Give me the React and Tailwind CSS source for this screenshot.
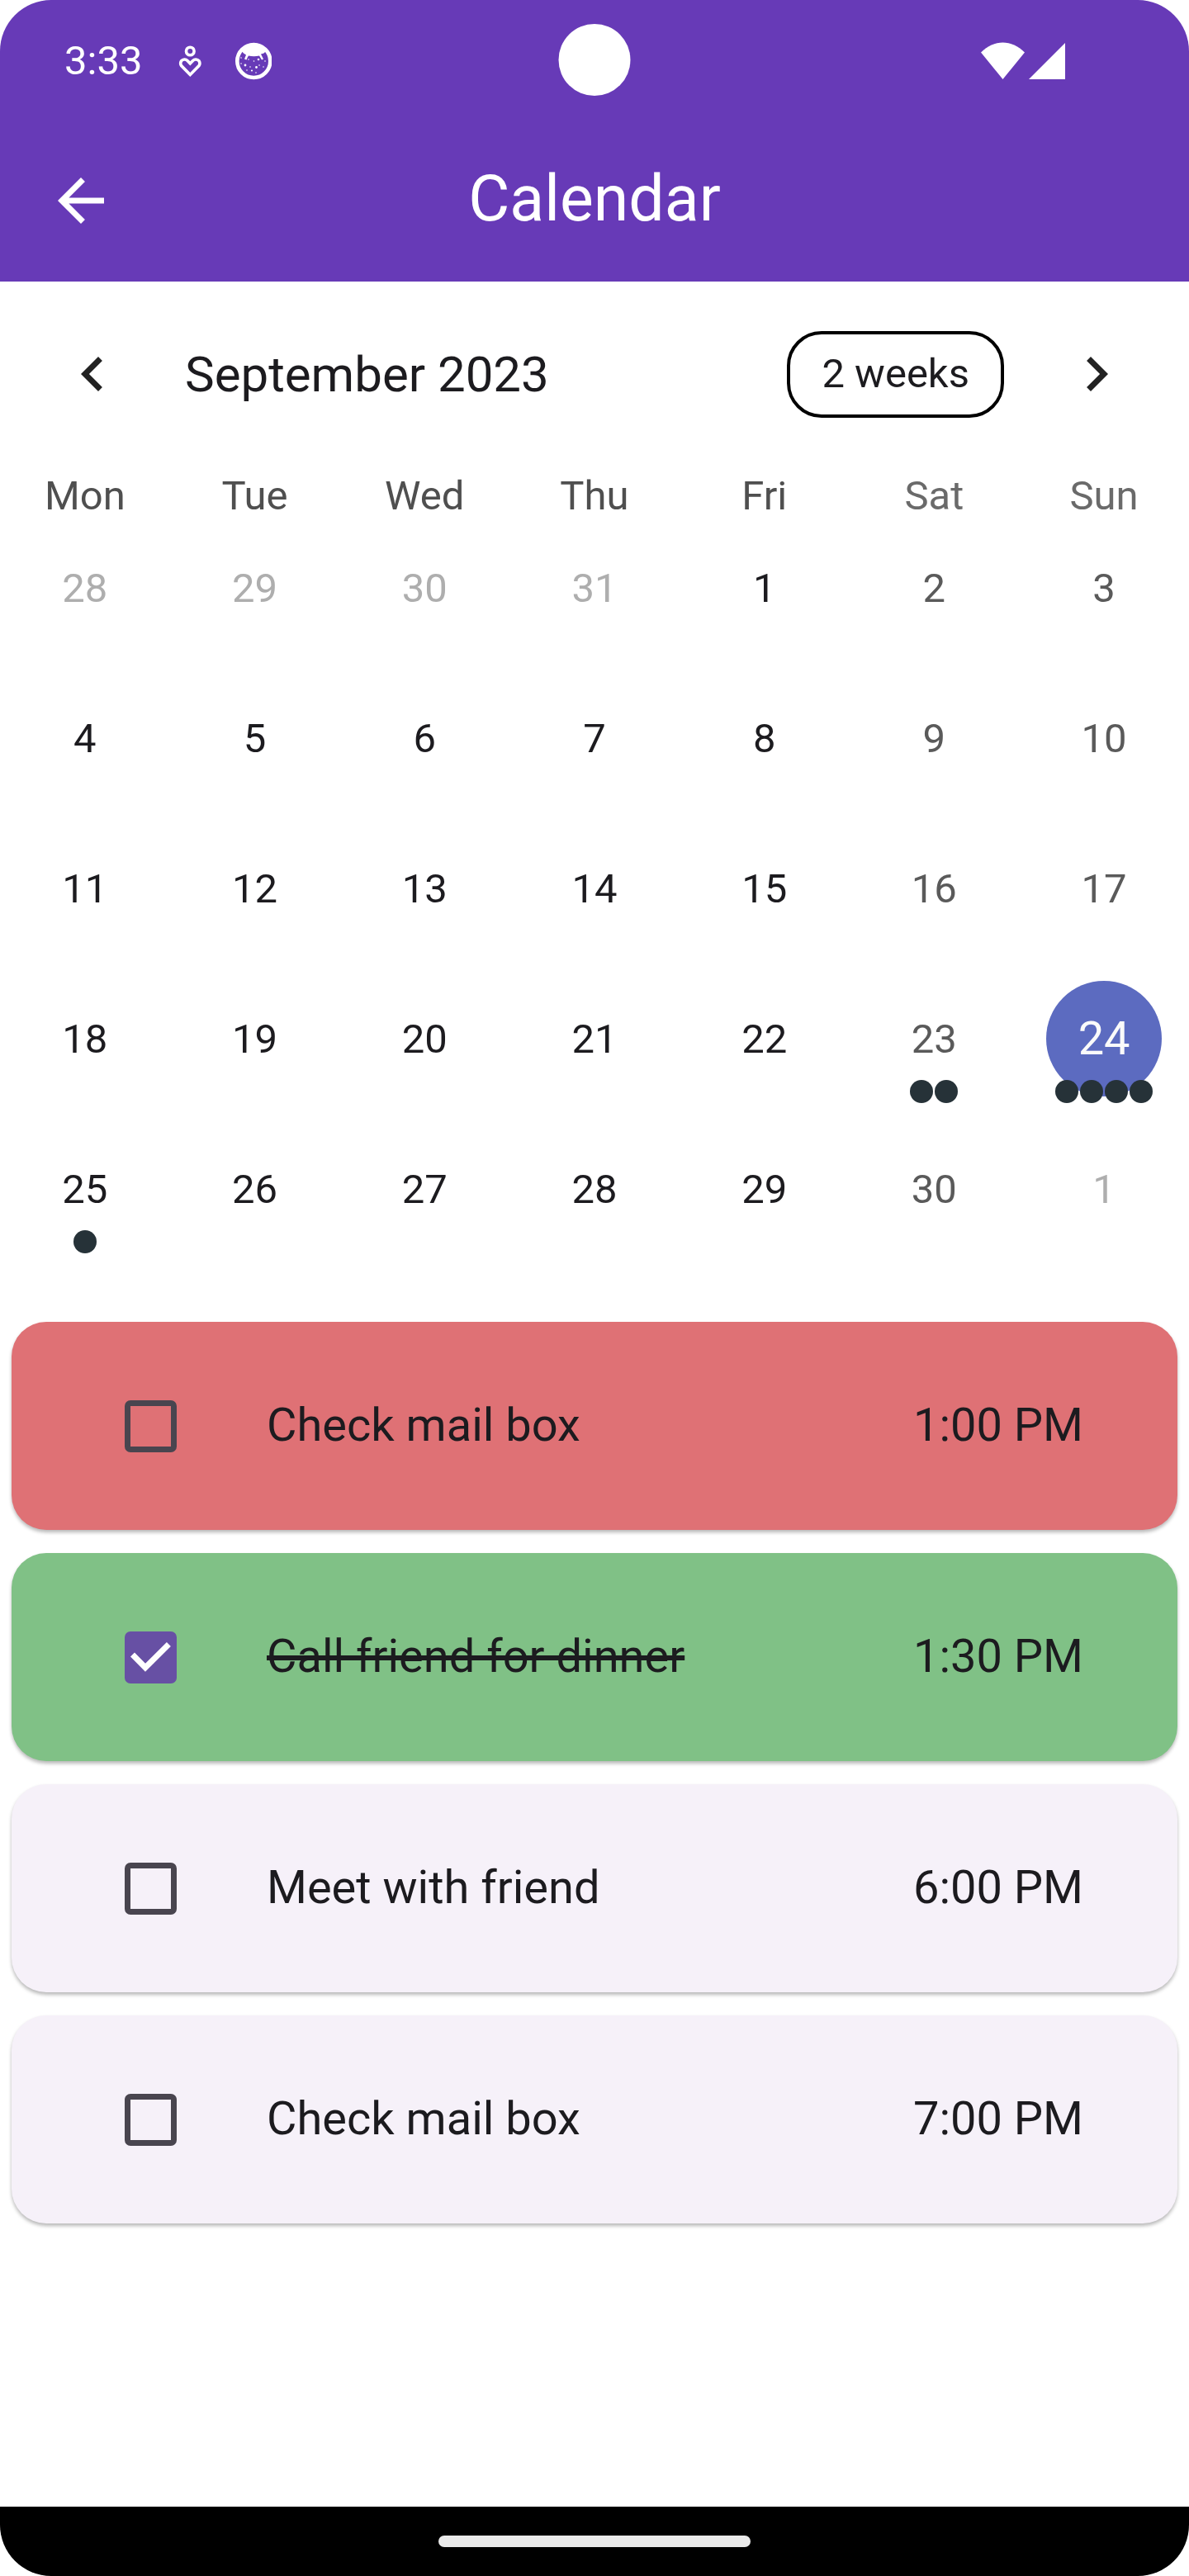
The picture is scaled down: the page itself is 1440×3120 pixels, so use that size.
import { useState } from "react";

const WEEKDAYS = ["Mon", "Tue", "Wed", "Thu", "Fri", "Sat", "Sun"];

const WEEKS = [
  [28, 29, 30, 31, 1, 2, 3],
  [4, 5, 6, 7, 8, 9, 10],
  [11, 12, 13, 14, 15, 16, 17],
  [18, 19, 20, 21, 22, 23, 24],
  [25, 26, 27, 28, 29, 30, 1],
];

// Number of events on days of the current month.
const EVENTS = { 23: 2, 24: 4, 25: 1 };

const TASKS = [
  { id: "t1", title: "Check mail box", time: "1:00 PM", done: false, card: "bg-[#df7175]" },
  { id: "t2", title: "Call friend for dinner", time: "1:30 PM", done: true, card: "bg-[#80c186]" },
  { id: "t3", title: "Meet with friend", time: "6:00 PM", done: false, card: "bg-[#f6f1f9]" },
  { id: "t4", title: "Check mail box", time: "7:00 PM", done: false, card: "bg-[#f6f1f9]" },
];

function HeartPersonIcon() {
  return (
    <svg viewBox="0 0 28 40" className="h-10 w-7" fill="none" stroke="currentColor" strokeWidth="3.6" aria-hidden="true">
      <circle cx="14.3" cy="8" r="4.8" />
      <path d="M14.3 36.4 L3.6 25.6 A5.4 5.4 0 0 1 3.6 19.8 C5.6 17.6 9 17.4 11 19.4 L14.3 22.8 L17.6 19.4 C19.6 17.4 23 17.6 25 19.8 A5.4 5.4 0 0 1 25 25.6 Z" />
    </svg>
  );
}

const SPECKS = [
  [7, 19, 0.8], [16, 21, 0.8], [22.5, 23, 0.8], [28, 21, 1.3], [36, 23, 0.8], [7, 26, 0.8], [12, 28, 1.4],
  [18, 30, 0.8], [25.5, 30.5, 1.4], [29, 28, 0.8], [34, 30, 0.8], [14, 34, 0.8], [20, 34.5, 1.1], [25, 37, 0.8],
];

function CatFaceIcon() {
  return (
    <svg viewBox="0 0 44 46" className="h-[46px] w-11" aria-hidden="true">
      <circle cx="22.3" cy="23" r="20" fill="none" stroke="currentColor" strokeWidth="4.6" />
      <path
        fill="currentColor"
        d="M7 10 C11 4 16 1.5 22.3 1.5 C29 1.5 34 4 38 10 L34.5 13.5 L31 14.5 L34 20.5 L32 21.5 L29 16.6 C25 17.6 20 17.6 16 16.6 L14.5 19 L13.5 21.5 L11 20.5 L13 15.5 L10 13.5 Z"
      />
      {SPECKS.map(([x, y, r]) => (
        <circle key={`${x}-${y}`} cx={x} cy={y} r={r} fill="currentColor" />
      ))}
    </svg>
  );
}

function StatusBar() {
  return (
    <div className="relative flex h-[145px] items-center justify-between pt-[2px] pr-[150px] pl-[78px]">
      <div className="flex items-center">
        <span className="text-[49px] leading-[58px]">3:33</span>
        <span className="ml-11"><HeartPersonIcon /></span>
        <span className="ml-[41px]"><CatFaceIcon /></span>
      </div>
      <span className="absolute top-[29px] left-1/2 size-[87px] -translate-x-1/2 rounded-full bg-white" />
      <div className="flex items-center gap-[5px]">
        <svg viewBox="0 0 53 45" className="h-[45px] w-[53px]" fill="currentColor" aria-hidden="true">
          <path d="M26.5 45 L0 12.5 C16 -3.5 37 -3.5 53 12.5 Z" />
        </svg>
        <svg viewBox="0 0 44 44" className="size-11" fill="currentColor" aria-hidden="true">
          <path d="M0 44 L44 0 V44 Z" />
        </svg>
      </div>
    </div>
  );
}

function Day({ day, weekend, outside }) {
  const count = outside ? 0 : EVENTS[day] || 0;
  const selected = !outside && day === 24;
  const color = outside ? "text-[#aeaeae]" : weekend ? "text-[#5a5a5a]" : "text-[#1c1b1f]";
  return (
    <button type="button" className="relative flex h-[182px] w-full items-center justify-center">
      {selected ? (
        <span className="flex size-[140px] items-center justify-center rounded-full bg-[#5c6bc0] text-[56px] text-[#fafafa]">
          {day}
        </span>
      ) : (
        <span className={`pt-[2px] text-[49px] ${color}`}>{day}</span>
      )}
      {count > 0 && (
        <span className="absolute inset-x-0 bottom-[13px] flex justify-center gap-[2px]">
          {Array.from({ length: count }, (_, i) => (
            <span key={i} className="size-7 rounded-full bg-[#263238]" />
          ))}
        </span>
      )}
    </button>
  );
}

function Calendar() {
  return (
    <section>
      <div className="flex items-center p-7">
        <button type="button" aria-label="Previous month" className="p-[42px]">
          <svg viewBox="0 0 24 24" className="size-[84px]" fill="#222222" aria-hidden="true">
            <path d="M15.41 7.41 14 6l-6 6 6 6 1.41-1.41L10.83 12z" />
          </svg>
        </button>
        <h2 className="flex-1 pt-[2px] pl-7 text-[60px] leading-[70px]">September 2023</h2>
        <button type="button" className="h-[105px] rounded-[42px] border-4 border-black px-[38px] text-[49px] leading-[70px]">
          2 weeks
        </button>
        <button type="button" aria-label="Next month" className="ml-7 p-[42px]">
          <svg viewBox="0 0 24 24" className="size-[84px]" fill="#222222" aria-hidden="true">
            <path d="M10 6 8.59 7.41 13.17 12l-4.58 4.59L10 18l6-6z" />
          </svg>
        </button>
      </div>
      <table className="w-full table-fixed border-collapse">
        <thead>
          <tr>
            {WEEKDAYS.map((name, i) => (
              <th key={name} scope="col" className="p-0 font-normal">
                <div className={`h-14 text-[49px] leading-[72px] ${i > 4 ? "text-[#6a6a6a]" : "text-[#4f4f4f]"}`}>
                  {name}
                </div>
              </th>
            ))}
          </tr>
        </thead>
        <tbody>
          {WEEKS.map((week, w) => (
            <tr key={w}>
              {week.map((day, i) => (
                <td key={i} className="p-0">
                  <Day day={day} weekend={i > 4} outside={(w === 0 && day > 7) || (w === 4 && day < 7)} />
                </td>
              ))}
            </tr>
          ))}
        </tbody>
      </table>
    </section>
  );
}

function Task({ task, onToggle }) {
  return (
    <li className={`flex h-[252px] items-center rounded-[42px] pr-[114px] pl-[137px] shadow-[0_3px_4px_rgba(0,0,0,0.28)] ${task.card}`}>
      <span className="grid">
        <input
          id={task.id}
          type="checkbox"
          checked={task.done}
          onChange={onToggle}
          className="col-start-1 row-start-1 size-[63px] appearance-none rounded-[7px] border-[7px] border-[#49454f] checked:border-[#6750a4] checked:bg-[#6750a4]"
        />
        {task.done && (
          <svg viewBox="0 0 63 63" className="pointer-events-none col-start-1 row-start-1 size-[63px]" fill="none" stroke="white" strokeWidth="7" aria-hidden="true">
            <path d="M9.5 28 L25 43.7 L53.4 15.5" />
          </svg>
        )}
      </span>
      <label
        htmlFor={task.id}
        className={`ml-[109px] flex-1 pb-[2px] text-[56px] leading-[84px] ${task.done ? "line-through decoration-[6px]" : ""}`}
      >
        {task.title}
      </label>
      <time className="pb-[2px] text-[56px] leading-[84px]">{task.time}</time>
    </li>
  );
}

export default function App() {
  const [tasks, setTasks] = useState(TASKS);
  const toggle = (id) => setTasks((list) => list.map((t) => (t.id === id ? { ...t, done: !t.done } : t)));

  return (
    <div className="flex min-h-screen flex-col overflow-hidden rounded-[62px] bg-white font-['Roboto',sans-serif] text-[#1c1b1f]">
      <header className="bg-[#673ab7] text-white">
        <StatusBar />
        <div className="grid h-[196px] grid-cols-[1fr_auto_1fr] items-center px-14">
          <button type="button" aria-label="Back" className="w-fit">
            <svg viewBox="0 0 24 24" className="size-[84px]" fill="currentColor" aria-hidden="true">
              <path d="M20 11H7.83l5.59-5.59L12 4l-8 8 8 8 1.41-1.41L7.83 13H20v-2z" />
            </svg>
          </button>
          <h1 className="pb-1 text-[77px] leading-[98px]">Calendar</h1>
        </div>
      </header>
      <main className="flex-1">
        <Calendar />
        <ul className="mt-[70px] flex flex-col gap-7 px-3.5">
          {tasks.map((task) => (
            <Task key={task.id} task={task} onToggle={() => toggle(task.id)} />
          ))}
        </ul>
      </main>
      <footer className="flex h-[84px] items-center justify-center bg-black">
        <span className="h-3.5 w-[378px] rounded-full bg-[#eaeaea]" />
      </footer>
    </div>
  );
}
